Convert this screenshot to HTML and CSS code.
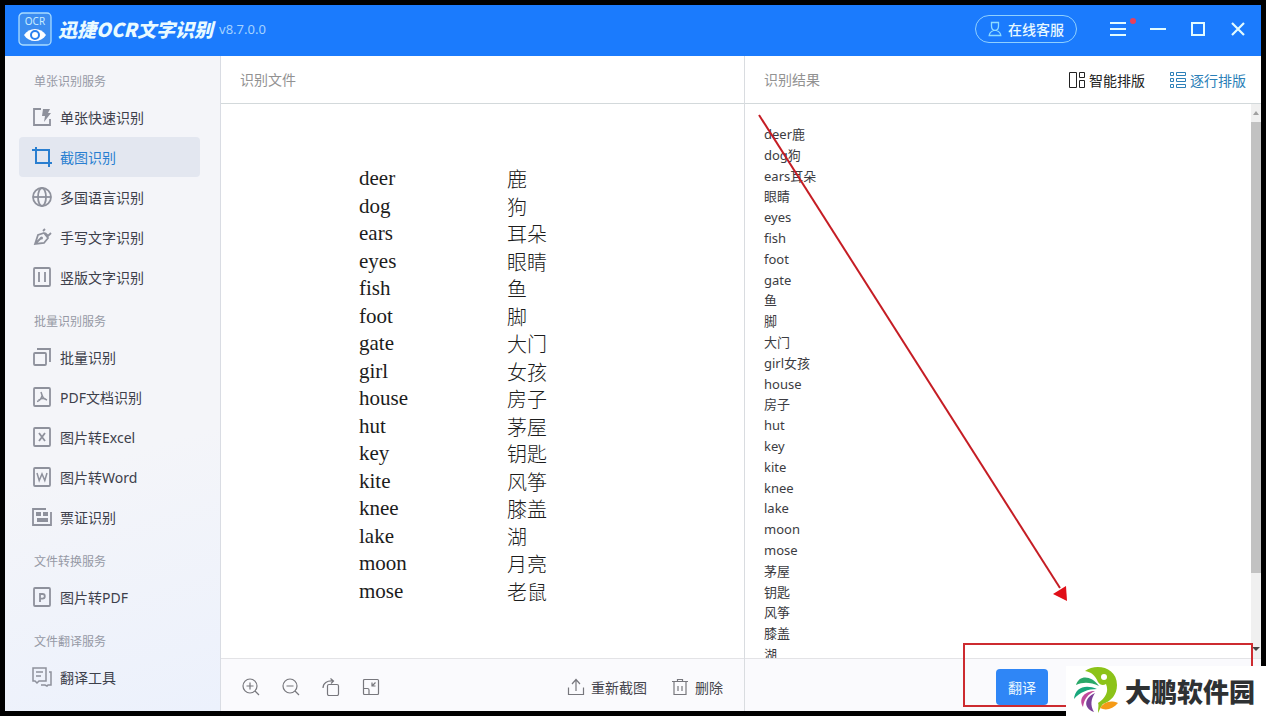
FILE: index.html
```html
<!DOCTYPE html>
<html lang="zh-CN">
<head>
<meta charset="utf-8">
<title>迅捷OCR文字识别</title>
<link rel="stylesheet" href="styles.css">
</head>
<body>
<div class="window">
  <header class="titlebar">
    <svg class="logo" viewBox="0 0 34 34" fill="none" stroke="#a9dcff">
      <rect x="1" y="1" width="32" height="32" rx="4" stroke-width="1.3" fill="#3b8cf0"/>
      <text class="logo-text" x="17" y="13" text-anchor="middle">OCR</text>
      <path d="M6 23c5-8 17-8 22 0c-5 8-17 8-22 0z" fill="#fff" stroke="none"/>
      <circle cx="17" cy="23" r="4" fill="#fff" stroke="#2b80ef" stroke-width="2"/>
    </svg>
    <h1 class="app-name">迅捷OCR文字识别</h1>
    <span class="version">v8.7.0.0</span>
    <button class="service" type="button">
      <svg class="icon-user" viewBox="0 0 14 16" fill="none" stroke="currentColor" stroke-width="1.3"><path d="M3.500 1.500h7v3.500c0 2.500-1.500 4.300-3.500 4.300s-3.500-1.800-3.500-4.300zM5.500 9.500c-2.500 1-4 2.500-4.300 5h11.600c-.3-2.500-1.800-4-4.300-5"/></svg>
      在线客服
    </button>
    <div class="win-controls">
      <button type="button" class="win-btn" aria-label="菜单">
        <svg viewBox="0 0 16 16" stroke="currentColor" stroke-width="2"><path d="M0 2h16M0 8h16M0 14h16"/></svg>
        <span class="red-dot"></span>
      </button>
      <button type="button" class="win-btn" aria-label="最小化"><svg viewBox="0 0 16 16" stroke="currentColor" stroke-width="2"><path d="M0 8h16"/></svg></button>
      <button type="button" class="win-btn" aria-label="最大化"><svg viewBox="0 0 16 16" fill="none" stroke="currentColor" stroke-width="2"><path d="M2 2h12v12H2z"/></svg></button>
      <button type="button" class="win-btn" aria-label="关闭"><svg viewBox="0 0 16 16" stroke="currentColor" stroke-width="2.200"><path d="M2 2l12 12M14 2L2 14"/></svg></button>
    </div>
  </header>

  <div class="workspace">
    <nav class="sidebar">
      <section class="group">
        <h2 class="group-title">单张识别服务</h2>
        <a class="item" href="#"><svg class="icon" viewBox="0 0 20 20"><path d="M9 2H2v16h16v-6M14 18h4"/><path class="solid" d="M11 2h7l-2 4h3l-7 9 1-6h-3z"/></svg>单张快速识别</a>
        <a class="item active" href="#"><svg class="icon" viewBox="0 0 20 20"><path d="M0 3h17v13.500M4 0v16h16M17 15v5"/></svg>截图识别</a>
        <a class="item" href="#"><svg class="icon" viewBox="0 0 20 20"><circle cx="10" cy="10" r="9"/><ellipse cx="10" cy="10" rx="4" ry="9"/><path d="M1 10h18"/></svg>多国语言识别</a>
        <a class="item" href="#"><svg class="icon" viewBox="0 0 20 20"><path d="M3 17l3-9 6-2 4 5-4 5zM3 17l6-6M11 4l2-2M13 6l3 3 3-3"/><circle class="solid" cx="9.500" cy="11" r="1.500"/></svg>手写文字识别</a>
        <a class="item" href="#"><svg class="icon" viewBox="0 0 20 20"><rect x="2" y="1" width="16" height="18" rx="1"/><path d="M7 5v10M13 5v10"/></svg>竖版文字识别</a>
      </section>
      <section class="group">
        <h2 class="group-title">批量识别服务</h2>
        <a class="item" href="#"><svg class="icon" viewBox="0 0 20 20"><rect x="2" y="6" width="12" height="12" rx="1"/><path d="M5 2h13v13"/></svg>批量识别</a>
        <a class="item" href="#"><svg class="icon" viewBox="0 0 20 20"><rect x="2" y="1" width="16" height="18" rx="1"/><path class="thin" d="M9 5c1.500 5 2 6.500 6 8M10 9c-1 3-2.500 5-5 5.500M6.500 13c2-1.500 5-2 7.500-1"/></svg>PDF文档识别</a>
        <a class="item" href="#"><svg class="icon" viewBox="0 0 20 20"><rect x="2" y="1" width="16" height="18" rx="1"/><path d="M7 6l6 8M13 6l-6 8"/></svg>图片转Excel</a>
        <a class="item" href="#"><svg class="icon" viewBox="0 0 20 20"><rect x="2" y="1" width="16" height="18" rx="1"/><path class="thin" d="M5 6l2.200 7.500L10 7l2.800 6.500L15 6"/></svg>图片转Word</a>
        <a class="item" href="#"><svg class="icon" viewBox="0 0 20 20"><path d="M14 2H1v16h18V5"/><path class="solid" d="M4 5h5v4H4zM11 5h5v4h-5zM5 11h11v4H5z"/></svg>票证识别</a>
      </section>
      <section class="group">
        <h2 class="group-title">文件转换服务</h2>
        <a class="item" href="#"><svg class="icon" viewBox="0 0 20 20"><rect x="2" y="1" width="16" height="18" rx="1"/><path d="M8 15V7h2.500a2.300 2.300 0 0 1 0 4.600H8"/></svg>图片转PDF</a>
      </section>
      <section class="group">
        <h2 class="group-title">文件翻译服务</h2>
        <a class="item" href="#"><svg class="icon" viewBox="0 0 20 20"><path class="thin" d="M1 1h13v13H7l-2 2-2-2H1zM4 5h7M4 9h5M17 5h2v13h-3l-1 1-2-1H9"/></svg>翻译工具</a>
      </section>
    </nav>

    <section class="panel source">
      <div class="panel-head"><h2 class="panel-title">识别文件</h2></div>
      <div class="document">
        <div class="word"><span>deer</span><span class="han">鹿</span></div>
        <div class="word"><span>dog</span><span class="han">狗</span></div>
        <div class="word"><span>ears</span><span class="han">耳朵</span></div>
        <div class="word"><span>eyes</span><span class="han">眼睛</span></div>
        <div class="word"><span>fish</span><span class="han">鱼</span></div>
        <div class="word"><span>foot</span><span class="han">脚</span></div>
        <div class="word"><span>gate</span><span class="han">大门</span></div>
        <div class="word"><span>girl</span><span class="han">女孩</span></div>
        <div class="word"><span>house</span><span class="han">房子</span></div>
        <div class="word"><span>hut</span><span class="han">茅屋</span></div>
        <div class="word"><span>key</span><span class="han">钥匙</span></div>
        <div class="word"><span>kite</span><span class="han">风筝</span></div>
        <div class="word"><span>knee</span><span class="han">膝盖</span></div>
        <div class="word"><span>lake</span><span class="han">湖</span></div>
        <div class="word"><span>moon</span><span class="han">月亮</span></div>
        <div class="word"><span>mose</span><span class="han">老鼠</span></div>
      </div>
      <div class="panel-foot">
        <div class="tools">
          <button type="button" class="tool" aria-label="放大"><svg viewBox="0 0 18 18"><circle cx="8" cy="8" r="7"/><path d="M13 13l4 4M4.500 8h7M8 4.500v7"/></svg></button>
          <button type="button" class="tool" aria-label="缩小"><svg viewBox="0 0 18 18"><circle cx="8" cy="8" r="7"/><path d="M13 13l4 4M4.500 8h7"/></svg></button>
          <button type="button" class="tool" aria-label="旋转"><svg viewBox="0 0 18 18"><rect x="5.500" y="6.500" width="11" height="11" rx="1.500"/><path d="M1 10c0-5 4-7.500 10-7M8.500.5L11.500 3 9 5.500"/></svg></button>
          <button type="button" class="tool" aria-label="适应窗口"><svg viewBox="0 0 18 18"><rect x="1.500" y="1.500" width="15" height="15" rx="1"/><path d="M1.500 10.500h4q1.500 0 1.500 1.500v4.500M13.500 4.500L10 8M10 4.500V8h3.500"/></svg></button>
        </div>
        <div class="actions">
          <button type="button" class="action"><svg viewBox="0 0 18 18"><path d="M1.500 9.500v7h15v-7M9 13V2M5 6l4-4.500L13 6"/></svg>重新截图</button>
          <button type="button" class="action"><svg viewBox="0 0 18 18"><path d="M1 3.500h16M6.500 3V1.500h5V3M3 4v12.500h12V4M7 8v5M11 8v5"/></svg>删除</button>
        </div>
      </div>
    </section>

    <section class="panel result">
      <div class="panel-head">
        <h2 class="panel-title">识别结果</h2>
        <div class="layouts">
          <button type="button" class="layout"><svg viewBox="0 0 18 18"><path d="M1.500 1.500h7v15h-7zM11.500 1.500h5v5h-5zM11.500 9.500h5v7h-5z"/></svg>智能排版</button>
          <button type="button" class="layout chosen"><svg viewBox="0 0 18 18"><path d="M1.500 1.500h3v3h-3zM1.500 7.500h3v3h-3zM1.500 13.500h3v3h-3zM7.500 1.500h9v3h-9zM7.500 7.500h9v3h-9zM7.500 13.500h9v3h-9z"/></svg>逐行排版</button>
        </div>
      </div>
      <div class="result-body">
        <ul class="lines">
          <li>deer鹿</li><li>dog狗</li><li>ears耳朵</li><li>眼睛</li><li>eyes</li><li>fish</li><li>foot</li><li>gate</li><li>鱼</li><li>脚</li><li>大门</li><li>girl女孩</li><li>house</li><li>房子</li><li>hut</li><li>key</li><li>kite</li><li>knee</li><li>lake</li><li>moon</li><li>mose</li><li>茅屋</li><li>钥匙</li><li>风筝</li><li>膝盖</li><li>湖</li>
        </ul>
        <div class="scrollbar">
          <svg class="scroll-arrow" viewBox="0 0 10 18"><path d="M2 11l3-4 3 4z"/></svg>
          <div class="track"><div class="thumb"></div></div>
          <svg class="scroll-arrow dark" viewBox="0 0 10 18"><path d="M1 7h8l-4 4z"/></svg>
        </div>
      </div>
      <div class="panel-foot"><button type="button" class="translate">翻译</button></div>
      <svg class="arrow" viewBox="0 0 310 488"><path d="M1 1L302 474" stroke="#c51d24" stroke-width="2"/><path d="M309 487l-14-7 13-8z" fill="#e00f18"/></svg>
    </section>
  </div>
</div>
<div class="highlight"></div>
<div class="watermark">
  <svg class="bird" viewBox="0 0 46 48">
    <path d="M11 4C22-4 43 0 43 18c0 10-6 16-14 19-2 2-3 5-5 9 0-5 1-8 0-10 8-5 11-12 8-19-3 2-6 1-8-2C21 8 17 5 11 4z" fill="#8cc319"/>
    <circle cx="30" cy="10" r="3" fill="#fff"/>
    <path d="M2 18C5 8 17 8 25 19 16 15 9 15 2 18z" fill="#2aa869"/>
    <path d="M0 32C1 20 12 17 23 22 14 22 6 25 0 32z" fill="#18a77c"/>
    <path d="M9 40C4 31 11 24 21 24c-7 3-11 8-12 16z" fill="#c0499b"/>
    <path d="M20 45c-11-4-10-14 1-19-4 6-5 12-1 19z" fill="#7b4298"/>
    <path d="M26 41c4-6 10-8 18-5-5 6-12 8-18 5z" fill="#f59a16"/>
  </svg>
  <span>大鹏软件园</span>
</div>
</body>
</html>
```
FILE: styles.css
```css
* { box-sizing: border-box; }

body {
  margin: 0;
  height: 100vh;
  padding: 5px;
  background: #000;
  font-family: "Noto Sans", "Noto Sans CJK SC", sans-serif;
  font-size: 14px;
  color: #3d404b;
  position: relative;
  overflow: hidden;
}

h1, h2, ul { margin: 0; padding: 0; font-weight: normal; }
ul { list-style: none; }
svg { display: block; flex: none; }

button {
  font: inherit;
  color: inherit;
  background: none;
  border: 0;
  padding: 0;
  display: flex;
  align-items: center;
  white-space: nowrap;
}

.window { height: 100%; display: flex; flex-direction: column; background: #fff; }

.titlebar {
  flex: none;
  height: 51px;
  padding: 0 3px 3px 13px;
  display: flex;
  align-items: center;
  background: #1b7bfd;
  color: #fff;
}
.logo { width: 34px; height: 34px; }
.logo-text { font: 10px "Noto Sans", sans-serif; fill: #c8ecff; stroke: none; }
.app-name {
  margin-left: 6px;
  font: italic 900 19px/24px "Noto Sans CJK SC", sans-serif;
  color: #e9faff;
  white-space: nowrap;
}
.version { margin-left: 6px; font-size: 13px; color: #a5d2ff; }
.service {
  margin-left: auto;
  margin-right: 21px;
  height: 28px;
  padding: 0 12px;
  gap: 6px;
  border: 1px solid #8fd0ff;
  border-radius: 14px;
  color: #e6f8ff;
  font-weight: 500;
}
.icon-user { width: 14px; height: 16px; color: #8fdcff; }
.win-controls { display: flex; }
.win-btn { width: 40px; height: 40px; justify-content: center; position: relative; color: #e2fbff; }
.win-btn svg { width: 16px; height: 16px; }
.red-dot { position: absolute; top: 9px; right: 2px; width: 6px; height: 6px; border-radius: 50%; background: #e8405c; }

.workspace { flex: 1; min-height: 0; display: grid; grid-template-columns: 216px 524fr 516fr; }

.sidebar {
  padding: 10px 20px 0 14px;
  border-right: 1px solid #d9dce3;
  background: linear-gradient(165deg, #f4f5f9 60%, #ecf1fc);
  overflow: hidden;
}
.group { margin-bottom: 9px; }
.group-title { padding-left: 15px; font-size: 12px; line-height: 31px; color: #9699a5; }
.item {
  height: 40px;
  padding-left: 13px;
  display: flex;
  align-items: center;
  gap: 8px;
  border-radius: 4px;
  color: #3d404b;
  text-decoration: none;
}
.item.active { background: #e3e7f0; color: #2a7fd0; }
.icon { width: 20px; height: 20px; fill: none; stroke: #8e919c; stroke-width: 1.8; }
.item.active .icon { stroke: #2a7fd0; stroke-width: 2; }
.icon .solid { fill: #8e919c; stroke: none; }
.icon .thin { stroke-width: 1.5; }

.panel { min-width: 0; min-height: 0; display: flex; flex-direction: column; position: relative; }
.source { border-right: 1px solid #d9dce0; }
.panel-head {
  flex: none;
  height: 48px;
  padding: 0 15px 0 19px;
  display: flex;
  align-items: center;
  justify-content: space-between;
  border-bottom: 1px solid #d3d9db;
}
.panel-title { font-size: 14px; line-height: 20px; color: #929292; }
.panel-foot {
  flex: none;
  height: 53px;
  padding: 4px 21px 0 21px;
  display: flex;
  align-items: center;
  justify-content: space-between;
  border-top: 1px solid #e3e3e6;
  background: #fafafd;
}

.document {
  flex: 1;
  min-height: 0;
  padding: 61px 20px 53px 138px;
  display: grid;
  grid-auto-rows: 1fr;
  font: 21px/27px "Liberation Serif", "Noto Sans CJK SC", serif;
  color: #1c1c1c;
}
.word { display: grid; grid-template-columns: 148px 1fr; align-items: center; min-height: 0; }
.han { font-family: "Noto Sans CJK SC", sans-serif; font-size: 20px; font-weight: 300; }

.tools { display: flex; gap: 22px; }
.actions { display: flex; gap: 24px; }
.action { gap: 6px; color: #45454d; }
.panel-foot svg { width: 18px; height: 18px; fill: none; stroke: #77777d; stroke-width: 1.2; }

.layouts { display: flex; gap: 24px; color: #222; }
.layout { gap: 3px; }
.layout svg { width: 18px; height: 18px; fill: none; stroke: currentColor; stroke-width: 1; }
.layout.chosen { color: #2b7fb8; }

.result-body { flex: 1; min-height: 0; display: flex; overflow: hidden; }
.lines { flex: 1; padding: 20px 0 0 19px; font-size: 13px; line-height: 1.6; color: #3c3c42; }
.scrollbar { width: 10px; display: flex; flex-direction: column; background: #f0f0f0; }
.scroll-arrow { width: 10px; height: 18px; fill: #a0a0a0; }
.scroll-arrow.dark { fill: #444; }
.track { flex: 1; }
.thumb { height: 87%; background: #c2c2c2; }

.result .panel-foot { justify-content: flex-end; padding-right: 213px; }
.translate {
  width: 52px;
  height: 36px;
  justify-content: center;
  border-radius: 4px;
  background: #2f86f6;
  color: #e8f7ff;
}
.arrow { position: absolute; left: 13px; top: 58px; width: 310px; height: 488px; pointer-events: none; }

.highlight {
  position: absolute;
  right: 13px;
  bottom: 9px;
  width: 290px;
  height: 64px;
  border: 2px solid #cd2b30;
  pointer-events: none;
}
.watermark {
  position: absolute;
  right: 0;
  bottom: 0;
  height: 50px;
  width: 200px;
  padding-left: 8px;
  display: flex;
  align-items: center;
  gap: 5px;
  background: #fff;
  font: 900 26px/50px "Noto Sans CJK SC", sans-serif;
  color: #2e3133;
  white-space: nowrap;
}
.bird { width: 46px; height: 48px; }
```
